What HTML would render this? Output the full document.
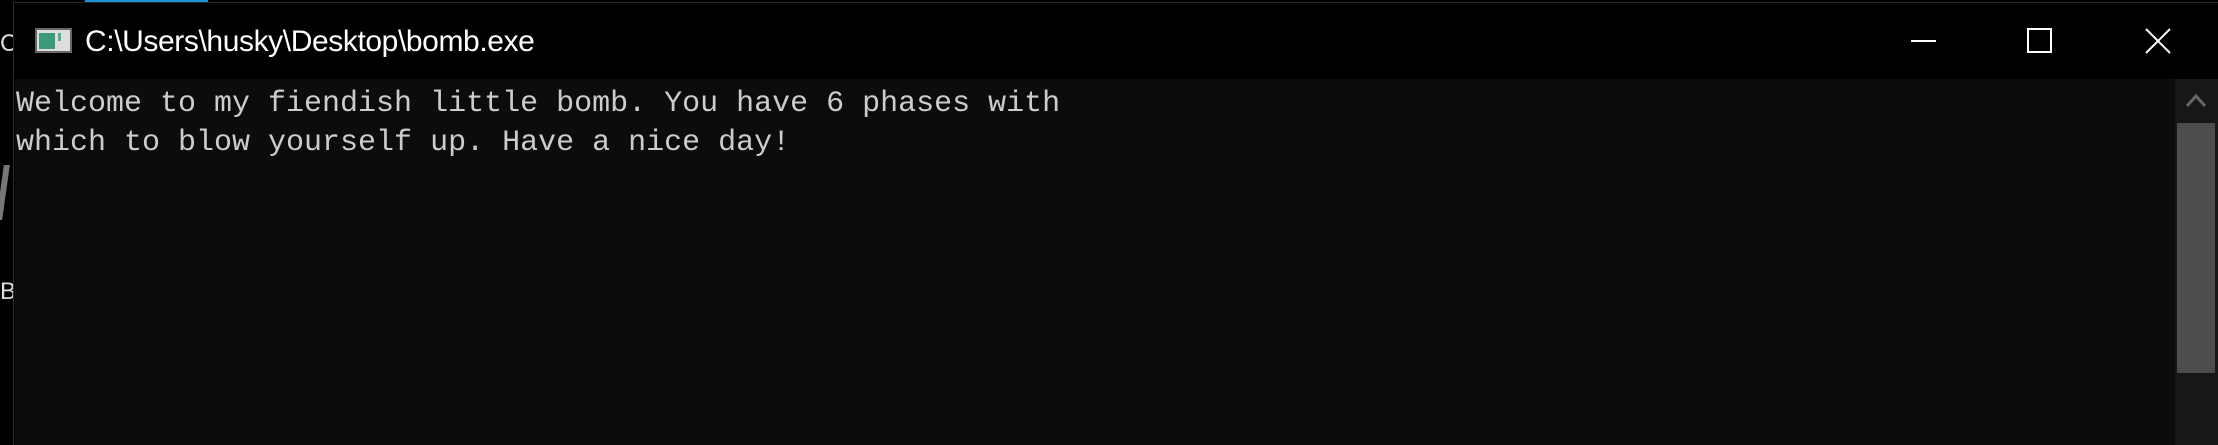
<!DOCTYPE html>
<html><head><style>
html,body{margin:0;padding:0;width:2218px;height:445px;background:#000;overflow:hidden;position:relative;font-family:"Liberation Sans",sans-serif}
.win{position:absolute;left:13px;top:2px;right:0;bottom:0;border-left:1px solid #2b2b2b;border-top:1px solid #2b2b2b;background:#000}
.title{position:absolute;left:71px;top:22px;font-size:30px;color:#fff;letter-spacing:-0.4px;white-space:nowrap}
.content{position:absolute;left:1px;top:76px;right:43px;bottom:0;background:#0c0c0c}
.txt{position:absolute;left:1px;top:6px;font-family:"Liberation Mono",monospace;font-size:30px;line-height:39px;color:#cccccc;white-space:pre}
.sb{position:absolute;right:0;top:76px;width:43px;bottom:0;background:#171717}
.thumb{position:absolute;left:2px;top:44px;width:38px;height:250px;background:#4d4d4d}
</style></head><body>
<div style="position:absolute;left:85px;top:0;width:123px;height:2px;background:#1e90d6"></div>
<div style="position:absolute;left:0;top:30px;color:#ddd;font-size:24px">C</div>
<div style="position:absolute;left:0;top:278px;color:#ddd;font-size:24px">B</div>
<div style="position:absolute;left:0;top:165px;width:6px;height:55px;background:#777;transform:skewX(-8deg)"></div>
<div class="win">
 <svg style="position:absolute;left:21px;top:25px" width="37" height="25" viewBox="0 0 37 25">
  <rect x="1" y="1" width="35" height="23" fill="#ddd" stroke="#666" stroke-width="2"/>
  <rect x="4" y="5" width="16" height="16" fill="#3c9a7a"/>
  <rect x="23" y="5" width="3" height="8" fill="#5a9"/>
 </svg>
 <div class="title">C:\Users\husky\Desktop\bomb.exe</div>
 <svg style="position:absolute;left:1897px;top:37px" width="26" height="2"><rect width="25" height="2" fill="#fff"/></svg>
 <svg style="position:absolute;left:2013px;top:25px" width="26" height="26"><rect x="1" y="1" width="23" height="23" fill="none" stroke="#fff" stroke-width="2"/></svg>
 <svg style="position:absolute;left:2131px;top:25px" width="26" height="26"><path d="M1 1L25 25M25 1L1 25" stroke="#fff" stroke-width="2"/></svg>
 <div class="content"><div class="txt">Welcome to my fiendish little bomb. You have 6 phases with
which to blow yourself up. Have a nice day!</div></div>
 <div class="sb">
  <svg style="position:absolute;left:11px;top:14px" width="20" height="14"><path d="M1 13L10 3L19 13" fill="none" stroke="#666" stroke-width="3"/></svg>
  <div class="thumb"></div>
 </div>
</div>
</body></html>
